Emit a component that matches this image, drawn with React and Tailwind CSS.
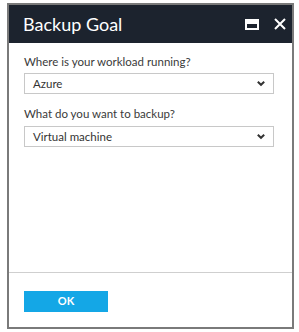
import React from "react";

function Chevron() {
  return (
    <svg width="10" height="7" viewBox="0 0 10 7" className="shrink-0">
      <path d="M1.8 1.8 L5 4.8 L8.2 1.8" fill="none" stroke="#333" strokeWidth="2" />
    </svg>
  );
}

function Select({ value }) {
  return (
    <div className="h-[21px] border border-[#c8c8c8] flex items-center justify-between pl-[8px] pr-[7px] text-[11.5px] text-[#333] bg-white">
      <span>{value}</span>
      <Chevron />
    </div>
  );
}

export default function App() {
  return (
    <div className="w-[299px] h-[332px] bg-white pt-[3px] pl-[7px]" style={{ fontFamily: 'Lato, "Noto Sans", sans-serif' }}>
      <div className="w-[287px] h-[326px] border-2 border-[#7a7a7a] flex flex-col">
        <div className="h-[38px] bg-[#1c232e] flex items-center pl-[14px] pr-[6px]">
          <span className="text-white text-[18px] leading-none flex-1">Backup Goal</span>
          <svg width="14" height="11" viewBox="0 0 14 11" className="mr-[15px]">
            <rect x="1" y="1" width="12" height="9" fill="none" stroke="#fff" strokeWidth="2" />
            <rect x="1" y="1" width="12" height="4" fill="#fff" />
          </svg>
          <svg width="12" height="12" viewBox="0 0 12 12">
            <path d="M1 1 L11 11 M11 1 L1 11" stroke="#fff" strokeWidth="2" />
          </svg>
        </div>
        <div className="flex-1 pl-[15px] pr-[18px] pt-[11px]">
          <div className="text-[11.5px] text-[#3a3a3a] leading-[16px] mb-[3px]">Where is your workload running?</div>
          <Select value="Azure" />
          <div className="text-[11.5px] text-[#3a3a3a] leading-[16px] mt-[12px] mb-[4px]">What do you want to backup?</div>
          <Select value="Virtual machine" />
        </div>
        <div className="h-[55px] border-t border-[#cfcfcf] pl-[15px] pt-[18px]">
          <div className="w-[84px] h-[21px] bg-[#14a7e6] flex items-center justify-center text-white text-[11px] font-bold">OK</div>
        </div>
      </div>
    </div>
  );
}
